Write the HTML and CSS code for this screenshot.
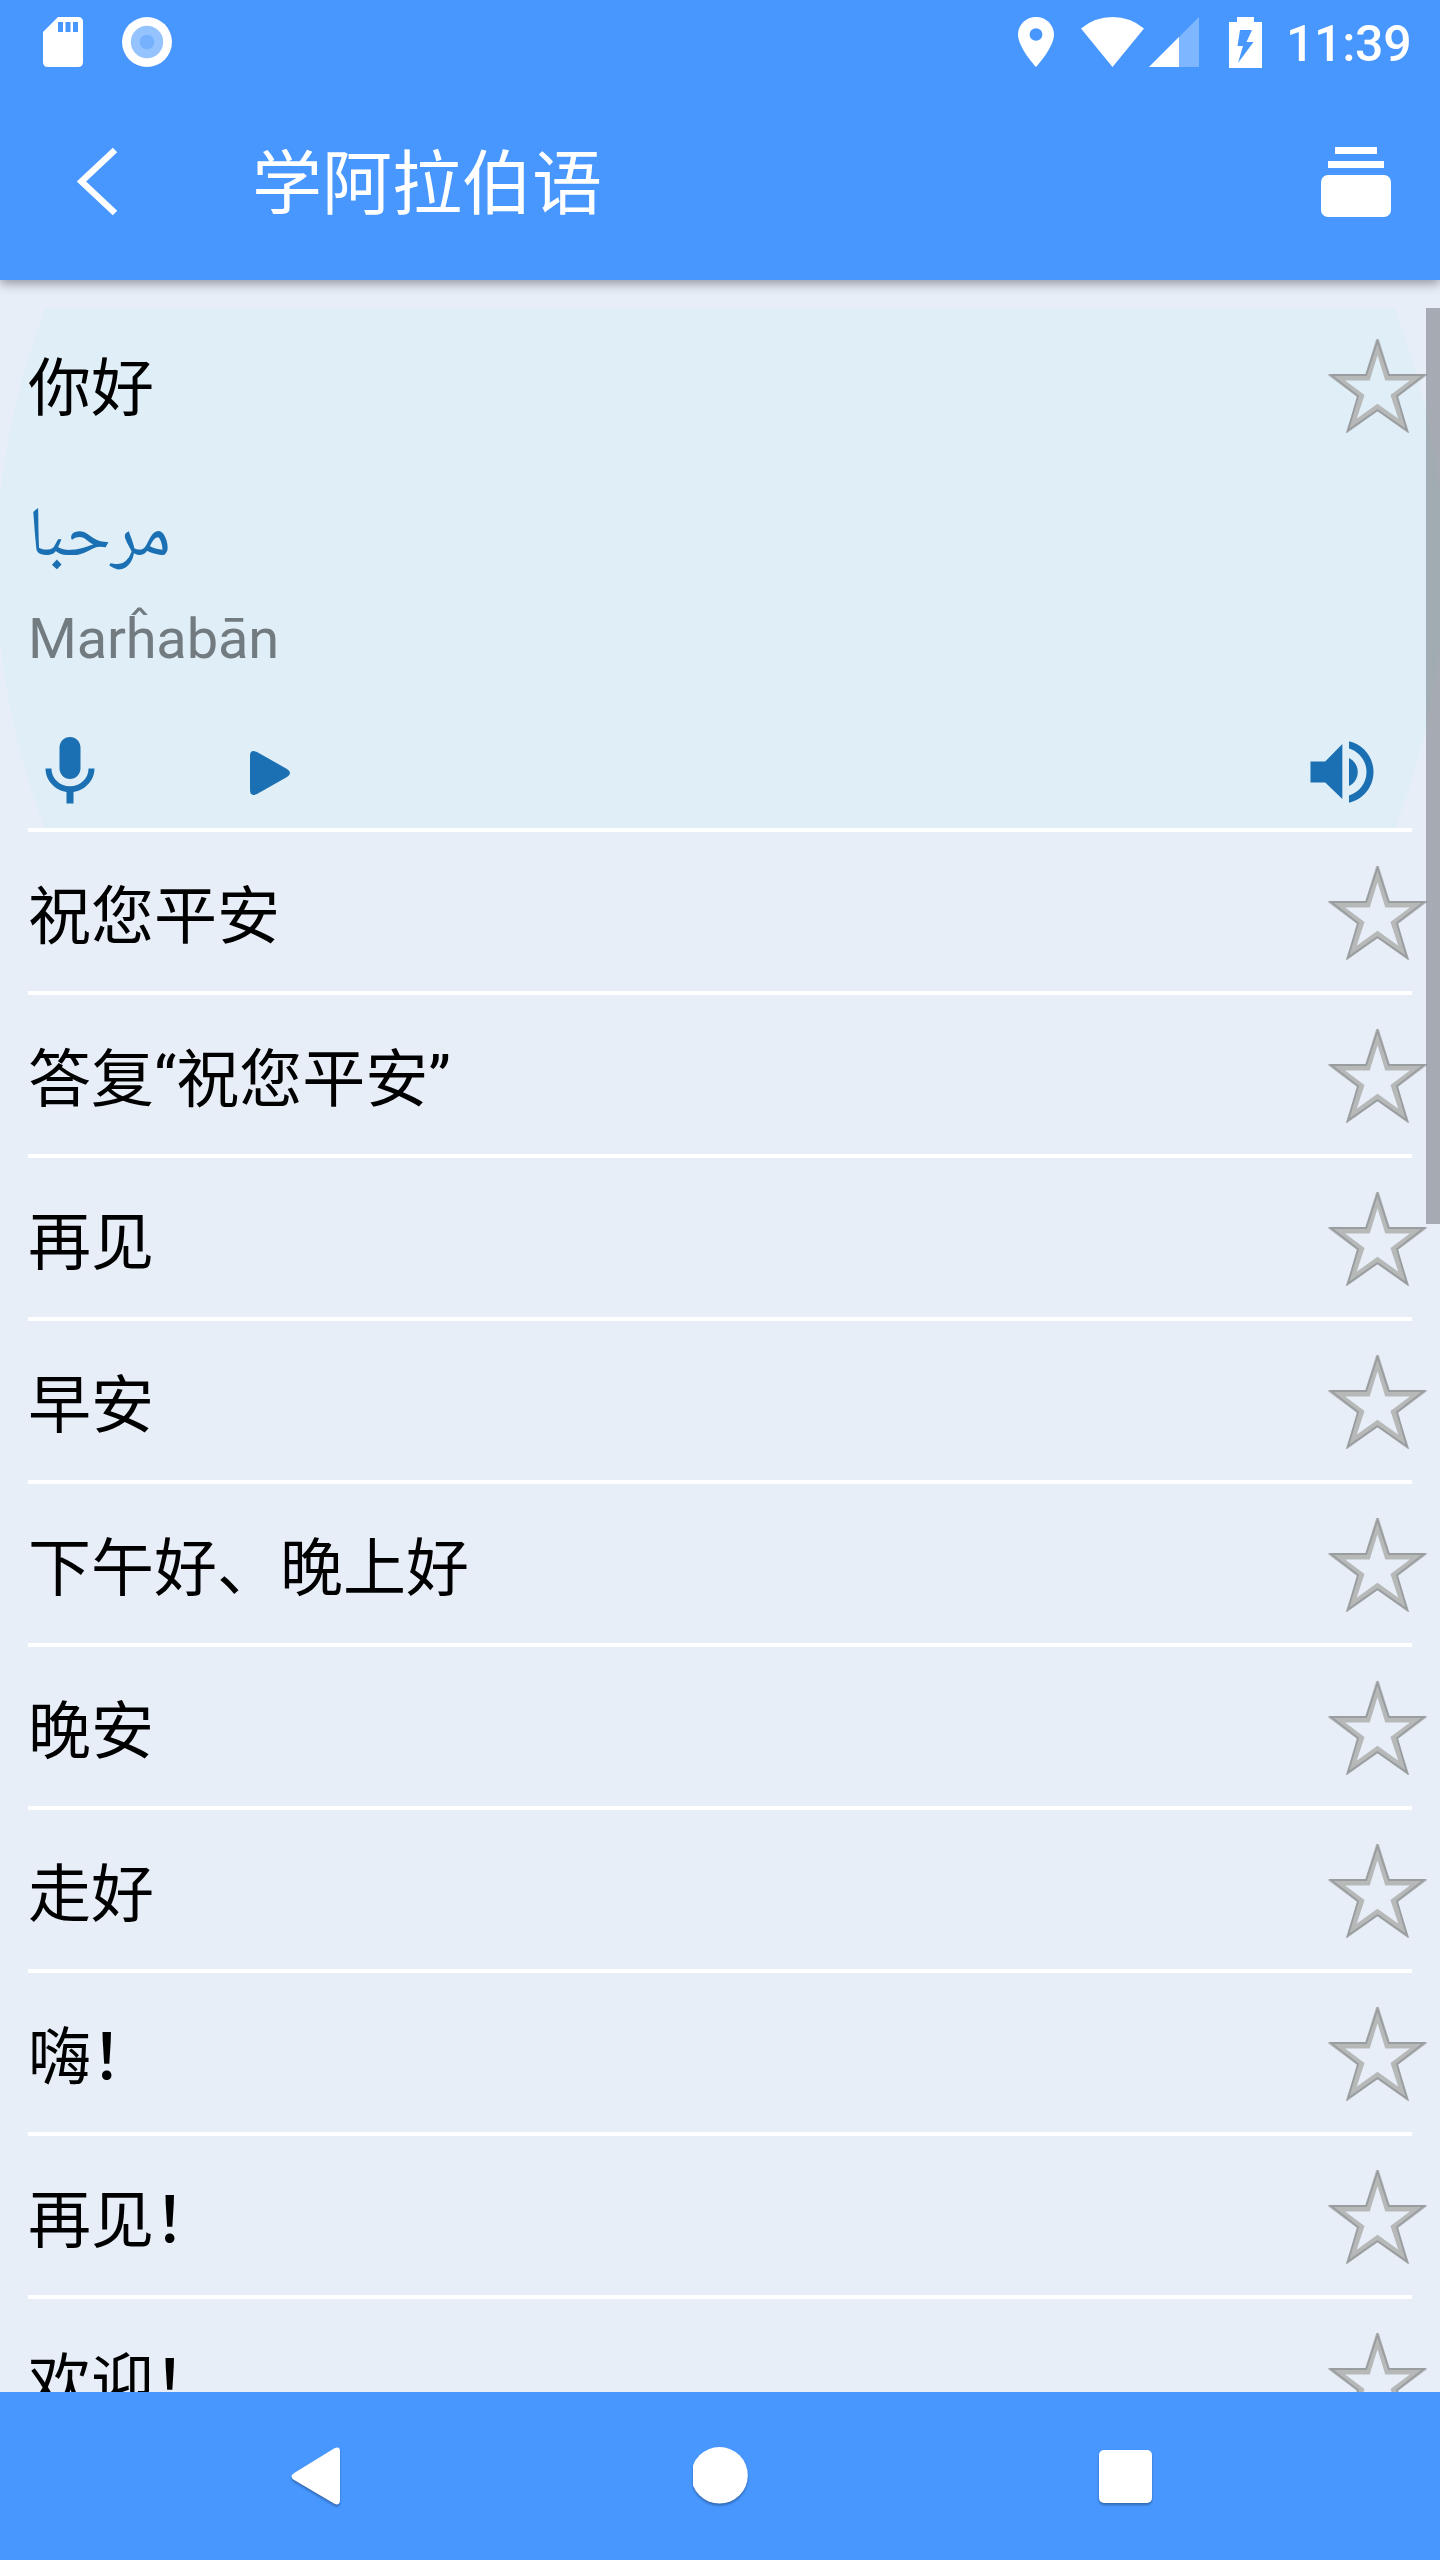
FILE: index.html
```html
<!DOCTYPE html>
<html lang="zh-CN">
<head>
  <meta charset="UTF-8" />
  <meta name="viewport" content="width=device-width, initial-scale=1.0" />
  <title>学阿拉伯语</title>
  <link rel="stylesheet" href="styles.css">
</head>
<body>
  <svg class="defs" width="0" height="0">
    <symbol id="star" viewBox="0 0 99 94">
      <path d="M49.500 6 L59.500 38.500 L91 38.500 L66 57 L76 87.500 L49.500 68.500 L23 87.500 L33 57 L8 38.500 L39.500 38.500 Z" fill="none" stroke="#b7b9b9" stroke-width="6"/>
      <path d="M49.500 2 L60.800 36 L96 36 L69 57 L79 91.500 L49.500 71 L20 91.500 L30 57 L3 36 L38.200 36 Z" fill="none" stroke="#999da0" stroke-width="1.800"/>
    </symbol>
  </svg>

  <div class="screen">
    <div class="status-bar">
      <svg class="sd" width="40" height="50" viewBox="0 0 40 50">
        <path d="M15 0H35Q40 0 40 5V45Q40 50 35 50H5Q0 50 0 45V15Z" fill="#fff"/>
        <path d="M15 5h5v10h-5zM22.500 5h5v10h-5zM30 5h5v10h-5z" fill="#4797ff"/>
      </svg>
      <svg class="disc" width="50" height="50" viewBox="0 0 50 50">
        <circle cx="25" cy="25" r="25" fill="#fff"/>
        <circle cx="25" cy="25" r="16.200" fill="#94c3fe"/>
        <circle cx="25" cy="25" r="7.300" fill="#76b1fe"/>
      </svg>
      <span class="spacer"></span>
      <svg class="pin" width="36" height="50" viewBox="5 2 14 20" preserveAspectRatio="none">
        <path d="M12 2C8.130 2 5 5.130 5 9c0 5.250 7 13 7 13s7-7.750 7-13c0-3.870-3.130-7-7-7zm0 9.500a2.500 2.500 0 0 1 0-5 2.500 2.500 0 0 1 0 5z" fill="#fff"/>
      </svg>
      <svg class="wifi" width="63" height="50" viewBox="0 0 63 50">
        <path d="M0 11.500Q13.500 0 31.500 0T63 11.500L31.500 50Z" fill="#fff"/>
      </svg>
      <svg class="signal" width="50" height="50" viewBox="0 0 50 50">
        <path d="M0 50L50 0V50Z" fill="#fff" fill-opacity=".3"/>
        <path d="M0 50L30 20V50Z" fill="#fff"/>
      </svg>
      <svg class="battery" width="33" height="51" viewBox="0 0 33 51">
        <path d="M8 0H25V5H33V51H0V5H8Z" fill="#fff"/>
        <path d="M11 13H23L17.500 25H24.500L9 46L14 29H8.500Z" fill="#4797ff"/>
      </svg>
      <span class="clock">11:39</span>
    </div>

    <div class="app-bar">
      <svg class="back" width="44" height="70" viewBox="0 0 44 70">
        <path d="M39 3L5.500 34.500L39 66" fill="none" stroke="#fff" stroke-width="6.500"/>
      </svg>
      <h1 class="title">学阿拉伯语</h1>
      <svg class="cards" width="70" height="70" viewBox="0 0 70 70">
        <path d="M14 0h42v7H14zM7 14h56v7H7z" fill="#fff"/>
        <rect y="28" width="70" height="42" rx="7" fill="#fff"/>
      </svg>
    </div>

    <div class="list">
      <div class="item open">
        <div class="row"><span>你好</span><svg class="star"><use href="#star"/></svg></div>
        <div class="arabic" lang="ar">مرحبا</div>
        <div class="roman">Marĥabān</div>
        <div class="controls">
          <svg width="84" height="84" viewBox="0 0 24 24" fill="#1a70b3">
            <path d="M12 14c1.660 0 3-1.340 3-3V5c0-1.660-1.340-3-3-3S9 3.340 9 5v6c0 1.660 1.340 3 3 3zM17.300 11c0 3-2.540 5.100-5.300 5.100S6.700 14 6.700 11H5c0 3.410 2.720 6.230 6 6.720V21h2v-3.280c3.280-.48 6-3.300 6-6.720h-1.700z"/>
          </svg>
          <svg class="play" width="40" height="44" viewBox="0 0 40 44" fill="#1a70b3">
            <path d="M0 5Q0-2 7 1L37 18Q43 22 37 26L7 43Q0 46 0 39Z"/>
          </svg>
          <span class="spacer"></span>
          <svg class="speaker" width="84" height="84" viewBox="0 0 24 24" fill="#1a70b3">
            <path d="M3 9v6h4.200l4.900 4.700V4L7.200 9H3zM16.500 12c0-1.770-1.020-3.290-2.500-4.030v8.050c1.480-.73 2.500-2.250 2.500-4.020zM14 3.230v2.060c2.890.86 5 3.540 5 6.710s-2.110 5.850-5 6.710v2.060c4.010-.91 7-4.490 7-8.770s-2.990-7.860-7-8.770z"/>
          </svg>
        </div>
      </div>
      <div class="item"><div class="row"><span>祝您平安</span><svg class="star"><use href="#star"/></svg></div></div>
      <div class="item"><div class="row"><span>答复“祝您平安”</span><svg class="star"><use href="#star"/></svg></div></div>
      <div class="item"><div class="row"><span>再见</span><svg class="star"><use href="#star"/></svg></div></div>
      <div class="item"><div class="row"><span>早安</span><svg class="star"><use href="#star"/></svg></div></div>
      <div class="item"><div class="row"><span>下午好、晚上好</span><svg class="star"><use href="#star"/></svg></div></div>
      <div class="item"><div class="row"><span>晚安</span><svg class="star"><use href="#star"/></svg></div></div>
      <div class="item"><div class="row"><span>走好</span><svg class="star"><use href="#star"/></svg></div></div>
      <div class="item"><div class="row"><span>嗨<b>！</b></span><svg class="star"><use href="#star"/></svg></div></div>
      <div class="item"><div class="row"><span>再见<b>！</b></span><svg class="star"><use href="#star"/></svg></div></div>
      <div class="item"><div class="row"><span>欢迎<b>！</b></span><svg class="star"><use href="#star"/></svg></div></div>
      <div class="scrollbar"></div>
    </div>

    <div class="nav-bar">
      <svg width="60" height="62" viewBox="0 0 60 62">
        <path d="M5 26.500L44 2.500Q50-.5 50 5.500V53.500Q50 60.500 44 57.500L5 34.500Q-2 30.500 5 26.500Z" fill="#fff"/>
      </svg>
      <svg width="60" height="62" viewBox="0 0 60 62"><circle cx="26.500" cy="29.300" r="28.300" fill="#fff"/></svg>
      <svg width="60" height="62" viewBox="0 0 60 62"><rect x="3" y="4" width="53" height="53" rx="5" fill="#fff"/></svg>
    </div>
  </div>
</body>
</html>
```
FILE: styles.css
```css
body {
  margin: 0;
  font-family: Roboto, "Noto Sans CJK SC", sans-serif;
  background: #e7eef8;
}
svg {
  display: block;
  flex: none;
}
.defs {
  position: absolute;
}
.screen {
  display: flex;
  flex-direction: column;
  width: 1440px;
  height: 2560px;
  overflow: hidden;
}
.spacer {
  flex: 1;
}
.status-bar {
  display: flex;
  align-items: center;
  flex: none;
  height: 84px;
  padding: 0 29px 0 43px;
  box-sizing: border-box;
  background: #4797ff;
  color: white;
  z-index: 2;
}
.disc {
  margin-left: 39px;
}
.wifi {
  margin-left: 27px;
}
.signal {
  margin-left: 5px;
}
.battery {
  margin-left: 30px;
}
.clock {
  width: 125px;
  margin: 4px 0 0 24px;
  font-size: 50px;
  font-weight: 500;
  line-height: 60px;
  letter-spacing: -0.3px;
  white-space: nowrap;
}
.app-bar {
  display: flex;
  align-items: center;
  flex: none;
  height: 196px;
  padding: 0 49px 0 76px;
  box-sizing: border-box;
  background: #4797ff;
  color: white;
  box-shadow: 0 4px 10px rgba(0,0,0,0.35);
  z-index: 1;
}
.title {
  flex: 1;
  margin: 6px 0 0 132px;
  font-size: 70px;
  font-weight: 400;
  line-height: 100px;
}
.list {
  position: relative;
  flex: 1;
  min-height: 0;
  padding-top: 28px;
  overflow: hidden;
}
.item {
  padding: 0 13px 0 28px;
}
.item::after {
  content: "";
  display: block;
  height: 4px;
  margin-right: 15px;
  background: white;
}
.row {
  display: flex;
  align-items: center;
  justify-content: space-between;
  height: 159px;
  color: black;
  font-size: 63px;
  line-height: 90px;
}
.row span {
  padding-top: 10px;
}
.row b {
  font-weight: 500;
}
.star {
  width: 99px;
  height: 94px;
  margin-top: 3px;
}
.open {
  background: radial-gradient(circle 724px at 720px 261px, #dfeef7 99.8%, rgba(223,238,247,0) 100%);
}
.open .row {
  height: 152px;
}
.arabic {
  height: 132px;
  color: #1a70b3;
  font-family: "Noto Naskh Arabic", "Noto Sans Arabic", "DejaVu Sans", sans-serif;
  font-size: 70px;
  line-height: 159px;
}
.roman {
  height: 138px;
  color: #727b80;
  font-size: 56px;
  line-height: 94px;
  letter-spacing: -0.2px;
}
.controls {
  display: flex;
  align-items: center;
  height: 84px;
  padding-bottom: 14px;
}
.play {
  margin: 2px 0 0 138px;
}
.speaker {
  margin-right: 43px;
}
.scrollbar {
  position: absolute;
  top: 28px;
  right: 0;
  width: 14px;
  height: 916px;
  background: rgba(0,0,0,0.28);
}
.nav-bar {
  display: flex;
  justify-content: space-between;
  flex: none;
  height: 168px;
  padding: 54px 284px 0 290px;
  box-sizing: border-box;
  background: #4797ff;
}
.nav-bar svg {
  filter: drop-shadow(0 2px 1px rgba(0,0,0,0.3));
}
```
